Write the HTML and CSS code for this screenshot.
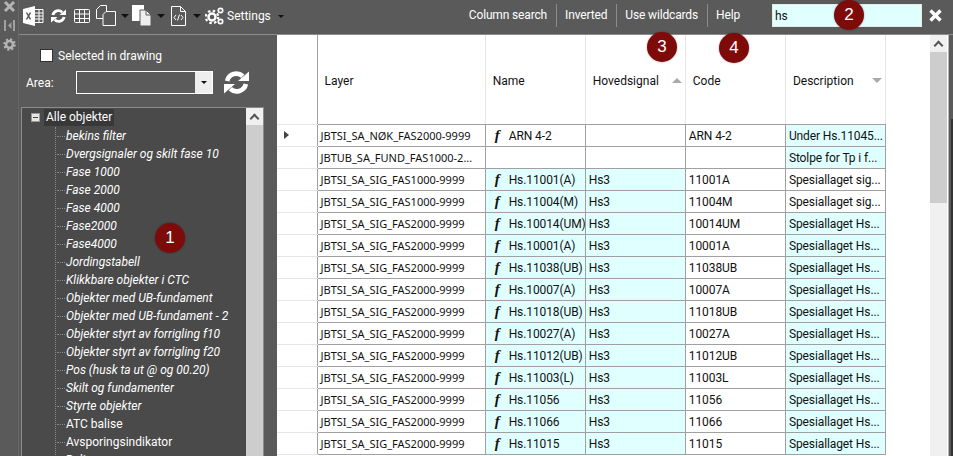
FILE: index.html
```html
<!DOCTYPE html>
<html lang="en">
<head>
  <meta charset="UTF-8" />
  <title>Layer search</title>
  <link rel="stylesheet" href="styles.css">
</head>
<body>
  <div class="app">
    <div class="strip">
      <svg class="strip-icon" width="13" height="13" viewBox="0 0 13 13"><path d="M2 2l9 9M11 2l-9 9" stroke="#b4b4b4" stroke-width="3"/></svg>
      <svg class="strip-icon" width="13" height="13" viewBox="0 0 13 13"><path d="M1 1h2v11H1zM10 1h2v11h-2zM8.500 3v7L5 6.500z" fill="#a0a0a0"/></svg>
      <svg class="strip-icon" width="13" height="13" viewBox="0 0 15 15"><circle cx="7.500" cy="7.500" r="4" fill="none" stroke="#b4b4b4" stroke-width="3"/><circle cx="7.500" cy="7.500" r="6" fill="none" stroke="#b4b4b4" stroke-width="2.500" stroke-dasharray="2.400 2.300"/></svg>
    </div>

    <div class="main">
      <div class="toolbar">
        <div class="tools">
          <svg class="icon" width="21" height="20" viewBox="0 0 21 20"><path d="M0 3l12-3v20L0 17z" fill="#fff"/><path d="M3.500 6.500l4 7M7.500 6.500l-4 7" stroke="#555" stroke-width="1.500"/><path d="M12 3.500h8v13h-8M12 7h8M12 10h8M12 13h8M16 3.500v13" fill="none" stroke="#fff"/></svg>
          <svg class="icon icon-refresh" width="15" height="16" viewBox="0 0 16 16"><path d="M2 7a6 6 0 0 1 10-3" fill="none" stroke="#fff" stroke-width="3"/><path d="M9 7h7V1z" fill="#fff"/><path d="M14 9a6 6 0 0 1-10 3" fill="none" stroke="#fff" stroke-width="3"/><path d="M7 9H0v6z" fill="#fff"/></svg>
          <svg class="icon icon-table" width="16" height="14" viewBox="0 0 16 14"><path d="M.5 1.500a1 1 0 0 1 1-1h13a1 1 0 0 1 1 1v11a1 1 0 0 1-1 1h-13a1 1 0 0 1-1-1zM.5 5h15M.5 9.500h15M5.500.5v13M10.500.5v13" fill="none" stroke="#fff"/></svg>
          <svg class="icon icon-tight" width="20" height="21" viewBox="0 0 20 21"><path d="M.5 4.500l4-4h6v11l-2 2h-8z" fill="none" stroke="#fff"/><path d="M7 9.500l3-3h9.500v14H7z" fill="#5a5a5a" stroke="#fff"/></svg>
          <span class="caret caret-copy"></span>
          <svg class="icon icon-tight" width="20" height="21" viewBox="0 0 20 21"><path d="M0 0h12v5h-2v11H0z" fill="#fff"/><path d="M8 5h6l5 5v11H8z" fill="#eee" stroke="#5a5a5a"/><path d="M14 5v5h5" fill="none" stroke="#5a5a5a"/></svg>
          <span class="caret caret-doc"></span>
          <svg class="icon" width="15" height="20" viewBox="0 0 15 20"><path d="M.5.500h9l5 5v14H.5zM9.500.500v5h5" fill="none" stroke="#fff"/><path d="M5 9l-2 2.500L5 14M10 9l2 2.500L10 14M8.500 8.500l-2 6" fill="none" stroke="#fff"/></svg>
          <span class="caret"></span>
          <svg class="icon icon-gears" width="19" height="18" viewBox="0 0 19 18"><circle cx="7" cy="10" r="3.500" fill="none" stroke="#fff" stroke-width="2.500"/><circle cx="7" cy="10" r="6.200" fill="none" stroke="#fff" stroke-width="2.200" stroke-dasharray="2.500 2.370"/><circle cx="15.500" cy="3.500" r="2.200" fill="none" stroke="#fff" stroke-width="1.700"/><circle cx="15.500" cy="14.500" r="2.200" fill="none" stroke="#fff" stroke-width="1.700"/></svg>
          <span class="tool-label">Settings</span>
          <span class="caret caret-small"></span>
        </div>
        <div class="actions">
          <span class="action">Column search</span>
          <span class="action">Inverted</span>
          <span class="action">Use wildcards</span>
          <span class="action action-last">Help</span>
          <input class="search" type="text" value="hs" />
          <svg class="clear" width="13" height="13" viewBox="0 0 13 13"><path d="M1.500 1.500l10 10M11.500 1.500l-10 10" stroke="#fff" stroke-width="3.500"/></svg>
        </div>
      </div>

      <div class="content">
        <div class="side">
          <label class="selected-row"><span class="checkbox"></span>Selected in drawing</label>
          <div class="area-row">
            <span class="area-label">Area:</span>
            <div class="combo"><span class="combo-btn"><span class="caret caret-dark"></span></span></div>
            <svg class="area-refresh" width="25" height="25" viewBox="0 0 16 16"><path d="M2 7a6 6 0 0 1 10-3" fill="none" stroke="#fff" stroke-width="3"/><path d="M9 7h7V1z" fill="#fff"/><path d="M14 9a6 6 0 0 1-10 3" fill="none" stroke="#fff" stroke-width="3"/><path d="M7 9H0v6z" fill="#fff"/></svg>
          </div>
          <div class="tree-box">
            <div class="tree">
              <div class="tree-root"><span class="expander"></span><span class="root-label">Alle objekter</span></div>
              <ul class="tree-list">
                <li class="it">bekins filter</li>
                <li class="it">Dvergsignaler og skilt fase 10</li>
                <li class="it">Fase 1000</li>
                <li class="it">Fase 2000</li>
                <li class="it">Fase 4000</li>
                <li class="it">Fase2000</li>
                <li class="it">Fase4000</li>
                <li class="it">Jordingstabell</li>
                <li class="it">Klikkbare objekter i CTC</li>
                <li class="it">Objekter med UB-fundament</li>
                <li class="it">Objekter med UB-fundament - 2</li>
                <li class="it">Objekter styrt av forrigling f10</li>
                <li class="it">Objekter styrt av forrigling f20</li>
                <li class="it">Pos (husk ta ut @ og 00.20)</li>
                <li class="it">Skilt og fundamenter</li>
                <li class="it">Styrte objekter</li>
                <li>ATC balise</li>
                <li>Avsporingsindikator</li>
                <li>Baliser</li>
              </ul>
            </div>
            <div class="scroll scroll-tree"><span class="scroll-btn"><span class="chevron"></span></span><span class="scroll-thumb"></span></div>
          </div>
        </div>

        <div class="grid-wrap">
          <table class="grid">
            <colgroup><col class="col-head"><col class="col-layer"><col class="col-name"><col class="col-data"><col class="col-data"><col class="col-data"></colgroup>
            <thead>
              <tr><th class="rh"></th><th>Layer</th><th>Name</th><th>Hovedsignal<span class="sort sort-up"></span></th><th>Code</th><th>Description<span class="sort sort-down"></span></th></tr>
            </thead>
            <tbody>
              <tr><td class="rh"><span class="current"></span></td><td class="layer">JBTSI_SA_NØK_FAS2000-9999</td><td><i class="fx">f</i>ARN 4-2</td><td></td><td>ARN 4-2</td><td class="hit">Under Hs.11045...</td></tr>
              <tr><td class="rh"></td><td class="layer">JBTUB_SA_FUND_FAS1000-2...</td><td></td><td></td><td></td><td class="hit">Stolpe for Tp i f...</td></tr>
              <tr><td class="rh"></td><td class="layer">JBTSI_SA_SIG_FAS1000-9999</td><td class="hit"><i class="fx">f</i>Hs.11001(A)</td><td class="hit">Hs3</td><td>11001A</td><td>Spesiallaget sig...</td></tr>
              <tr><td class="rh"></td><td class="layer">JBTSI_SA_SIG_FAS1000-9999</td><td class="hit"><i class="fx">f</i>Hs.11004(M)</td><td class="hit">Hs3</td><td>11004M</td><td>Spesiallaget sig...</td></tr>
              <tr><td class="rh"></td><td class="layer">JBTSI_SA_SIG_FAS2000-9999</td><td class="hit"><i class="fx">f</i>Hs.10014(UM)</td><td class="hit">Hs3</td><td>10014UM</td><td class="hit">Spesiallaget Hs...</td></tr>
              <tr><td class="rh"></td><td class="layer">JBTSI_SA_SIG_FAS2000-9999</td><td class="hit"><i class="fx">f</i>Hs.10001(A)</td><td class="hit">Hs3</td><td>10001A</td><td class="hit">Spesiallaget Hs...</td></tr>
              <tr><td class="rh"></td><td class="layer">JBTSI_SA_SIG_FAS2000-9999</td><td class="hit"><i class="fx">f</i>Hs.11038(UB)</td><td class="hit">Hs3</td><td>11038UB</td><td class="hit">Spesiallaget Hs...</td></tr>
              <tr><td class="rh"></td><td class="layer">JBTSI_SA_SIG_FAS2000-9999</td><td class="hit"><i class="fx">f</i>Hs.10007(A)</td><td class="hit">Hs3</td><td>10007A</td><td class="hit">Spesiallaget Hs...</td></tr>
              <tr><td class="rh"></td><td class="layer">JBTSI_SA_SIG_FAS2000-9999</td><td class="hit"><i class="fx">f</i>Hs.11018(UB)</td><td class="hit">Hs3</td><td>11018UB</td><td class="hit">Spesiallaget Hs...</td></tr>
              <tr><td class="rh"></td><td class="layer">JBTSI_SA_SIG_FAS2000-9999</td><td class="hit"><i class="fx">f</i>Hs.10027(A)</td><td class="hit">Hs3</td><td>10027A</td><td class="hit">Spesiallaget Hs...</td></tr>
              <tr><td class="rh"></td><td class="layer">JBTSI_SA_SIG_FAS2000-9999</td><td class="hit"><i class="fx">f</i>Hs.11012(UB)</td><td class="hit">Hs3</td><td>11012UB</td><td class="hit">Spesiallaget Hs...</td></tr>
              <tr><td class="rh"></td><td class="layer">JBTSI_SA_SIG_FAS2000-9999</td><td class="hit"><i class="fx">f</i>Hs.11003(L)</td><td class="hit">Hs3</td><td>11003L</td><td class="hit">Spesiallaget Hs...</td></tr>
              <tr><td class="rh"></td><td class="layer">JBTSI_SA_SIG_FAS2000-9999</td><td class="hit"><i class="fx">f</i>Hs.11056</td><td class="hit">Hs3</td><td>11056</td><td class="hit">Spesiallaget Hs...</td></tr>
              <tr><td class="rh"></td><td class="layer">JBTSI_SA_SIG_FAS2000-9999</td><td class="hit"><i class="fx">f</i>Hs.11066</td><td class="hit">Hs3</td><td>11066</td><td class="hit">Spesiallaget Hs...</td></tr>
              <tr><td class="rh"></td><td class="layer">JBTSI_SA_SIG_FAS2000-9999</td><td class="hit"><i class="fx">f</i>Hs.11015</td><td class="hit">Hs3</td><td>11015</td><td class="hit">Spesiallaget Hs...</td></tr>
            </tbody>
          </table>
          <div class="scroll scroll-grid"><span class="scroll-btn"><span class="chevron"></span></span><span class="scroll-thumb"></span></div>
        </div>
        <div class="gutter"><span class="gutter-line"></span></div>
      </div>
    </div>
  </div>

  <span class="marker marker-1">1</span>
  <span class="marker marker-2">2</span>
  <span class="marker marker-3">3</span>
  <span class="marker marker-4">4</span>
</body>
</html>
```

FILE: styles.css
```css
* {
  box-sizing: border-box;
}
html, body {
  margin: 0;
  height: 100%;
  overflow: hidden;
}
body {
  font-family: Roboto, 'Noto Sans', sans-serif;
  font-size: 12px;
  background: #5a5a5a;
  color: #fff;
  position: relative;
}
.app {
  display: flex;
  height: 456px;
}
.strip {
  width: 19px;
  flex: none;
  display: flex;
  flex-direction: column;
  align-items: center;
  gap: 6px;
  border-right: 1px solid #666;
}
.strip-icon {
  display: block;
}
.main {
  flex: 1;
  min-width: 0;
  display: flex;
  flex-direction: column;
}

/* toolbar */
.toolbar {
  height: 35px;
  flex: none;
  display: flex;
  justify-content: space-between;
  padding: 3px 11px 6px 4px;
  border-bottom: 1px solid #8c8c8c;
}
.tools {
  display: flex;
  align-items: center;
}
.icon {
  display: block;
  margin-right: 7px;
}
.icon-refresh {
  margin-right: 8px;
}
.icon-table {
  margin-right: 6px;
}
.icon-tight {
  margin-right: 5px;
}
.icon-gears {
  margin-right: 3px;
}
.caret {
  display: block;
  width: 0;
  height: 0;
  margin-right: 4px;
  border-left: 4px solid transparent;
  border-right: 4px solid transparent;
  border-top: 4px solid #111;
}
.caret-copy {
  margin-right: 3px;
}
.caret-doc {
  margin-right: 6px;
}
.caret-small {
  margin: 1px 0 0 7px;
  border-left-width: 3px;
  border-right-width: 3px;
  border-top-width: 3px;
}
.caret-dark {
  margin: 0;
  border-left-width: 3px;
  border-right-width: 3px;
  border-top-width: 3px;
}
.tool-label {
  font-size: 12px;
}
.actions {
  display: flex;
  align-items: center;
}
.action {
  padding: 0 9px 0 8px;
  height: 23px;
  line-height: 23px;
  letter-spacing: -0.15px;
  border-right: 1px solid #8c8c8c;
}
.action-last {
  border-right: none;
  padding-right: 32px;
}
.search {
  width: 150px;
  height: 23px;
  padding: 0 2px;
  font: 12px Roboto, sans-serif;
  color: #111;
  background: #e0ffff;
  border: 1px solid #e8e8e8;
  outline: none;
}
.clear {
  margin-left: 7px;
}

/* left panel */
.content {
  flex: 1;
  min-height: 0;
  display: flex;
}
.side {
  width: 258px;
  flex: none;
  display: flex;
  flex-direction: column;
}
.selected-row {
  display: flex;
  align-items: center;
  gap: 5px;
  margin: 14px 0 0 21px;
  height: 13px;
}
.checkbox {
  width: 13px;
  height: 13px;
  background: #fff;
  border: 1px solid #333;
}
.area-row {
  display: flex;
  align-items: center;
  margin: 8px 0 0 7px;
  height: 25px;
}
.area-label {
  width: 50px;
}
.combo {
  width: 137px;
  height: 23px;
  border: 1px solid #fff;
  display: flex;
  justify-content: flex-end;
}
.combo-btn {
  width: 17px;
  background: #eee;
  display: flex;
  align-items: center;
  justify-content: center;
}
.area-refresh {
  margin-left: 11px;
}
.tree-box {
  flex: 1;
  min-height: 0;
  margin: 12px 13px 0 2px;
  display: flex;
  border: 1px solid #8c8c8c;
  border-bottom: none;
  overflow: hidden;
}
.tree {
  flex: 1;
  background: #4a4a4a;
  padding-left: 9px;
  overflow: hidden;
}
.tree-root {
  display: flex;
  align-items: center;
  height: 19px;
}
.expander {
  width: 9px;
  height: 9px;
  background: #e6e6e6 linear-gradient(#444, #444) center / 5px 1px no-repeat;
  border: 1px solid #999;
  margin-right: 4px;
}
.root-label {
  background: #383838;
  padding: 0 2px;
  height: 17px;
  line-height: 17px;
}
.tree-list {
  list-style: none;
  margin: 0 0 0 24px;
  padding: 0 0 0 10px;
  border-left: 1px dotted #8c8c8c;
}
.tree-list li {
  height: 18px;
  line-height: 18px;
  white-space: nowrap;
  position: relative;
}
.tree-list li::before {
  content: "";
  position: absolute;
  left: -9px;
  top: 9px;
  width: 8px;
  border-top: 1px dotted #8c8c8c;
}
.it {
  font-style: italic;
}
.scroll {
  width: 17px;
  flex: none;
  display: flex;
  flex-direction: column;
  background: #f0f0f0;
}
.scroll-tree {
  background: #cdcdcd;
}
.scroll-btn {
  height: 17px;
  flex: none;
  background: #f0f0f0;
  display: flex;
  align-items: center;
  justify-content: center;
}
.chevron {
  width: 7px;
  height: 7px;
  margin-top: 4px;
  border-left: 2px solid #555;
  border-top: 2px solid #555;
  transform: rotate(45deg);
}
.scroll-thumb {
  height: 151px;
  background: #cdcdcd;
}

/* grid */
.grid-wrap {
  width: 671px;
  flex: none;
  background: #fff;
  display: flex;
  justify-content: space-between;
  overflow: hidden;
}
.grid {
  width: 609px;
  height: 0;
  table-layout: fixed;
  border-collapse: collapse;
  color: #111;
}
.col-head {
  width: 40px;
}
.col-layer {
  width: 168px;
}
.col-name {
  width: 100px;
}
.col-data {
  width: 100px;
}
.grid th {
  height: 89px;
  padding: 3px 0 0 7px;
  font-weight: normal;
  text-align: left;
  position: relative;
  border-right: 1px solid #e6e6e6;
  border-bottom: 1px solid #a0a0a0;
}
.grid td {
  height: 22px;
  padding: 1px 0 0 3px;
  white-space: nowrap;
  overflow: hidden;
  letter-spacing: -0.1px;
  border-right: 1px solid #a0a0a0;
  border-bottom: 1px solid #a0a0a0;
}
.grid .rh {
  border-right: 1px solid #a0a0a0;
  border-bottom-color: #e6e6e6;
  padding: 0 0 0 7px;
}
.grid td.hit {
  background: #e0ffff;
}
.grid td.layer {
  font-family: 'Noto Sans', sans-serif;
  font-size: 11px;
  letter-spacing: 0;
}
.fx {
  font: italic bold 15px 'Liberation Serif', serif;
  display: inline-block;
  width: 14px;
  margin: 0 0 0 6px;
}
.current {
  display: block;
  width: 0;
  height: 0;
  border-top: 4px solid transparent;
  border-bottom: 4px solid transparent;
  border-left: 5px solid #444;
}
.sort {
  position: absolute;
  right: 3px;
  top: 43px;
  width: 0;
  height: 0;
  border-left: 5px solid transparent;
  border-right: 5px solid transparent;
}
.sort-up {
  border-bottom: 5px solid #aaa;
}
.sort-down {
  border-top: 5px solid #aaa;
}
.scroll-grid {
  margin-right: 1px;
}
.gutter {
  flex: 1;
  border-left: 1px solid #b4b4b4;
  padding: 84px 0 0 2px;
}
.gutter-line {
  display: block;
  height: 100%;
  border-left: 2px solid #333;
}

/* numbered markers */
.marker {
  position: absolute;
  width: 30px;
  height: 30px;
  border-radius: 50%;
  background: #7f0a0a;
  color: #fff;
  font: 17px/30px 'Liberation Sans', sans-serif;
  text-align: center;
  box-shadow: 0 0 2px rgba(0, 0, 0, 0.4);
}
.marker-1 {
  left: 155px;
  top: 223px;
}
.marker-2 {
  left: 834px;
  top: 0;
}
.marker-3 {
  left: 647px;
  top: 32px;
}
.marker-4 {
  left: 719px;
  top: 33px;
}
```
